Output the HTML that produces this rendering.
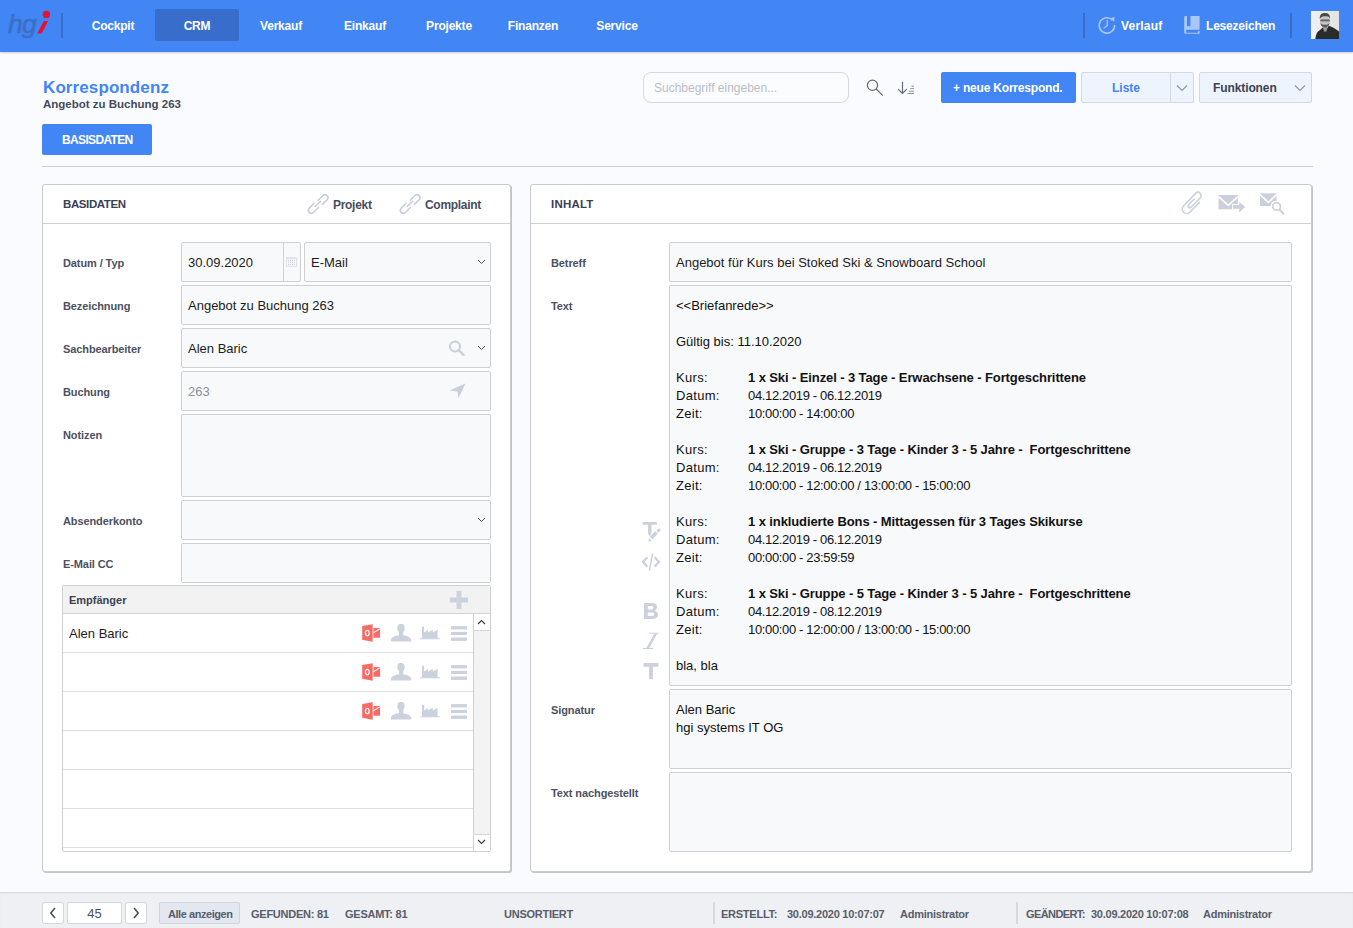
<!DOCTYPE html>
<html><head><meta charset="utf-8">
<style>
*{box-sizing:border-box;margin:0;padding:0}
html,body{width:1353px;height:928px;overflow:hidden}
body{background:#fafbfe;font-family:"Liberation Sans",sans-serif;position:relative;color:#1d1d1f}
.a{position:absolute;white-space:nowrap}
#nav{position:absolute;left:0;top:0;width:1353px;height:52px;background:#4285f4;box-shadow:0 1px 2px rgba(0,0,0,.18)}
.tab{position:absolute;top:9px;height:32px;width:84px;line-height:34px;text-align:center;color:#fff;font-weight:bold;font-size:12px;letter-spacing:-.2px}
.tab.on{background:#386dcb;border-radius:2px}
.nsep{position:absolute;width:2px;background:#3a6cc6}
.btn{position:absolute;border-radius:2px}
.lbl{position:absolute;font-size:11px;font-weight:bold;color:#4b5161;letter-spacing:-.1px;margin-top:1px}
.inp{position:absolute;background:#f8f9fb;border:1px solid #cfd0d1;border-radius:2px}
.it{position:absolute;font-size:13px;color:#1b1b1b}
.panel{position:absolute;background:#fff;border:1px solid #c9cacd;border-radius:3px;box-shadow:1px 1px 0 #c4c5c8}
.ph{position:absolute;left:0;right:0;top:0;height:39px;border-bottom:1px solid #cfd0d3}
.ptitle{position:absolute;font-size:12px;font-weight:bold;color:#3a4152}
.mail{position:absolute;left:676px;font-size:13px;color:#111;line-height:18px;margin-top:1px}
.mail b{font-weight:bold;letter-spacing:-.1px}
.dg{letter-spacing:-.35px}
.kl{letter-spacing:.3px}
.row{position:absolute;left:63px;width:411px;height:39px;border-bottom:1px solid #dcdcdc;background:#fff}
.ft{position:absolute;font-size:11px;color:#575d6a;font-weight:bold;letter-spacing:-.25px;margin-top:1px}
</style></head><body>

<div id="nav">
  <!-- logo -->
  <svg class="a" style="left:0;top:0" width="56" height="52" viewBox="0 0 56 52">
    <text x="8" y="33.3" font-family="Liberation Sans" font-style="italic" font-size="26.5" fill="#3b6fc6" stroke="#3b6fc6" stroke-width="0.6" letter-spacing="-0.8">hg</text>
    <path d="M37.2 33.6 L41.6 33.6 L48.2 21 L43.8 21 Z" fill="#e8112f"/>
    <circle cx="46.4" cy="14.4" r="3.7" fill="#e8112f"/>
  </svg>
  <div class="nsep" style="left:61px;top:13px;height:25px"></div>
  <div class="tab" style="left:71px">Cockpit</div>
  <div class="tab on" style="left:155px">CRM</div>
  <div class="tab" style="left:239px">Verkauf</div>
  <div class="tab" style="left:323px">Einkauf</div>
  <div class="tab" style="left:407px">Projekte</div>
  <div class="tab" style="left:491px">Finanzen</div>
  <div class="tab" style="left:575px">Service</div>

  <div class="nsep" style="left:1083px;top:13px;height:25px"></div>
  <!-- history icon -->
  <svg class="a" style="left:1097px;top:15px" width="20" height="20" viewBox="0 0 20 20">
    <path d="M15.6 5.2 A7.7 7.7 0 1 0 17.6 10" fill="none" stroke="#a9c6f8" stroke-width="1.6"/>
    <path d="M13.2 3.2 L17.6 2 L17.2 6.8 Z" fill="#a9c6f8"/>
    <path d="M10.2 5 V10.6 L6.6 13.2" fill="none" stroke="#a9c6f8" stroke-width="1.3"/>
  </svg>
  <div class="a" style="left:1121px;top:19px;font-size:12px;font-weight:bold;color:#fff;letter-spacing:.2px">Verlauf</div>
  <!-- book icon -->
  <svg class="a" style="left:1184px;top:16px" width="16" height="18" viewBox="0 0 16 18">
    <path d="M0.2 1 Q0.2 0 1.2 0 H15.6 V13.7 H2.2 V16.7 H13.9 V15 H15.6 V17.8 H1.2 Q0.2 17.8 0.2 16.8 Z" fill="#a9c6f8"/>
    <path d="M3 0 V10.8 L4.7 9.7 L6.4 10.8 V0 Z" fill="#4285f4"/>
  </svg>
  <div class="a" style="left:1206px;top:19px;font-size:12px;font-weight:bold;color:#fff;letter-spacing:-.2px">Lesezeichen</div>
  <div class="nsep" style="left:1290px;top:13px;height:25px"></div>
  <!-- avatar -->
  <svg class="a" style="left:1311px;top:11px" width="28" height="28" viewBox="0 0 28 28">
    <defs><linearGradient id="avbg" x1="0" x2="1"><stop offset="0" stop-color="#f2f2f2"/><stop offset="1" stop-color="#e2e2e2"/></linearGradient></defs>
    <rect width="28" height="28" fill="url(#avbg)"/>
    <path d="M4.3 28 C4.8 23 6.5 20 9 19 L12 16.2 L15 19 L17.8 14.8 C21 16 25 18 28 20.5 V28 Z" fill="#2b2b2b"/>
    <path d="M11.3 15 H16.5 L15.5 20.5 H13 Z" fill="#9a9a9a"/>
    <ellipse cx="14" cy="10.5" rx="4.6" ry="5.6" fill="#c4c4c4"/>
    <path d="M9.4 11 C9.5 15 11.5 16.2 14 16.2 C16.5 16.2 18.5 15 18.6 11 C18 13.5 16.5 14 14 13.5 C11.5 14 10 13.5 9.4 11Z" fill="#5a5a5a"/>
    <rect x="9.3" y="8.4" width="9.6" height="2" fill="#6a6a6a"/>
    <path d="M8.8 8 C8.5 3 11 2 14 2 C17 2 19.5 3.5 19 8 L18 6 C16 5 12 5 10 6.5 Z" fill="#4a4a4a"/>
  </svg>
</div>

<!-- header -->
<div class="a" style="left:43px;top:78px;font-size:17px;font-weight:bold;color:#4285f4;letter-spacing:.1px">Korrespondenz</div>
<div class="a" style="left:43px;top:98px;font-size:11.5px;font-weight:bold;color:#454b5a">Angebot zu Buchung 263</div>
<div class="btn" style="left:42px;top:124px;width:110px;height:31px;background:#4285f4"></div>
<div class="a" style="left:62px;top:133px;font-size:12px;font-weight:bold;color:#fff;letter-spacing:-.65px">BASISDATEN</div>
<div class="a" style="left:42px;top:166px;width:1271px;height:1px;background:#c9ccd2"></div>

<!-- search -->
<div class="a" style="left:643px;top:72px;width:206px;height:31px;border:1px solid #d6d8dc;border-radius:8px;background:#fbfcfe"></div>
<div class="a" style="left:654px;top:81px;font-size:12px;color:#b9bec6">Suchbegriff eingeben...</div>
<svg class="a" style="left:865px;top:79px" width="19" height="18" viewBox="0 0 19 18">
  <circle cx="7.5" cy="6.3" r="5.1" fill="none" stroke="#636a75" stroke-width="1.2"/>
  <path d="M11.2 10 L17.8 16.7" stroke="#636a75" stroke-width="1.2"/>
</svg>
<svg class="a" style="left:896px;top:80px" width="20" height="16" viewBox="0 0 20 16">
  <path d="M6.5 1.8 V13.3 M2.1 9.1 L6.5 13.5 L10.8 9.1" fill="none" stroke="#636b76" stroke-width="1.2"/>
  <path d="M15.5 6.2 H18 M14.2 8.6 H18 M13 11.2 H18 M11.5 13.5 H18" stroke="#8a929b" stroke-width="1"/>
</svg>
<div class="btn" style="left:941px;top:72px;width:135px;height:31px;background:#4285f4"></div>
<div class="a" style="left:953px;top:81px;font-size:12px;font-weight:bold;color:#fff;letter-spacing:-.2px">+ neue Korrespond.</div>
<div class="btn" style="left:1081px;top:72px;width:113px;height:31px;background:#eef4fd;border:1px solid #d3d9e2"></div>
<div class="a" style="left:1170px;top:73px;width:1px;height:29px;background:#d3d9e2"></div>
<div class="a" style="left:1112px;top:81px;font-size:12px;font-weight:bold;color:#4285f4">Liste</div>
<svg class="a" style="left:1176px;top:84px" width="12" height="8" viewBox="0 0 12 8"><path d="M1 1.5 L6 6.5 L11 1.5" fill="none" stroke="#8d96a3" stroke-width="1.1"/></svg>
<div class="btn" style="left:1199px;top:72px;width:113px;height:31px;background:#eef4fd;border:1px solid #d3d9e2"></div>
<div class="a" style="left:1213px;top:81px;font-size:12px;font-weight:bold;color:#3c4252;letter-spacing:-.1px">Funktionen</div>
<svg class="a" style="left:1294px;top:84px" width="12" height="8" viewBox="0 0 12 8"><path d="M1 1.5 L6 6.5 L11 1.5" fill="none" stroke="#8d96a3" stroke-width="1.1"/></svg>

<!-- LEFT PANEL -->
<div class="panel" style="left:42px;top:184px;width:469px;height:688px">
  <div class="ph"></div>
</div>
<div class="ptitle" style="left:63px;top:198px;font-size:11.5px;letter-spacing:-.4px">BASIDATEN</div>
<svg class="a" style="left:304px;top:190px" width="28" height="28" viewBox="0 0 28 28"><path d="M14.2 10.3 L18.88 5.58 A3 3 0 0 1 23.12 9.82 L18.5 14.4 M10.1 13.2 L5.18 18.18 A3 3 0 0 0 9.42 22.42 L14.37 17.47 M11.3 16.4 L16.6 11.2" fill="none" stroke="#c6cdd9" stroke-width="1.5" stroke-linecap="round"/></svg>
<div class="a" style="left:333px;top:198px;font-size:12px;font-weight:bold;color:#474d5c;letter-spacing:-.3px">Projekt</div>
<svg class="a" style="left:396px;top:190px" width="28" height="28" viewBox="0 0 28 28"><path d="M14.2 10.3 L18.88 5.58 A3 3 0 0 1 23.12 9.82 L18.5 14.4 M10.1 13.2 L5.18 18.18 A3 3 0 0 0 9.42 22.42 L14.37 17.47 M11.3 16.4 L16.6 11.2" fill="none" stroke="#c6cdd9" stroke-width="1.5" stroke-linecap="round"/></svg>
<div class="a" style="left:425px;top:198px;font-size:12px;font-weight:bold;color:#474d5c;letter-spacing:-.3px">Complaint</div>

<div class="lbl" style="left:63px;top:256px">Datum / Typ</div>
<div class="lbl" style="left:63px;top:299px">Bezeichnung</div>
<div class="lbl" style="left:63px;top:342px">Sachbearbeiter</div>
<div class="lbl" style="left:63px;top:385px">Buchung</div>
<div class="lbl" style="left:63px;top:428px">Notizen</div>
<div class="lbl" style="left:63px;top:514px">Absenderkonto</div>
<div class="lbl" style="left:63px;top:557px">E-Mail CC</div>

<div class="inp" style="left:181px;top:242px;width:120px;height:40px"></div>
<div class="a" style="left:283px;top:243px;width:1px;height:38px;background:#cfd0d1"></div>
<svg class="a" style="left:286px;top:257px" width="11" height="10" viewBox="0 0 11 10">
  <rect x="0" y="0" width="11" height="10" fill="#dfe2e8"/>
  <rect x="1" y="2" width="9" height="7" fill="#f6f7f9"/>
  <g fill="#cdd2da"><rect x="2" y="3" width="1" height="1"/><rect x="4" y="3" width="1" height="1"/><rect x="6" y="3" width="1" height="1"/><rect x="8" y="3" width="1" height="1"/><rect x="2" y="5" width="1" height="1"/><rect x="4" y="5" width="1" height="1"/><rect x="6" y="5" width="1" height="1"/><rect x="8" y="5" width="1" height="1"/><rect x="2" y="7" width="1" height="1"/><rect x="4" y="7" width="1" height="1"/><rect x="6" y="7" width="1" height="1"/><rect x="8" y="7" width="1" height="1"/></g>
</svg>
<div class="it" style="left:188px;top:255px">30.09.2020</div>
<div class="inp" style="left:304px;top:242px;width:187px;height:40px"></div>
<div class="it" style="left:311px;top:255px">E-Mail</div>
<svg class="a" style="left:477px;top:259px" width="9" height="6" viewBox="0 0 9 6"><path d="M1 1 L4.5 4.5 L8 1" fill="none" stroke="#474b52" stroke-width="1"/></svg>

<div class="inp" style="left:181px;top:285px;width:310px;height:40px"></div>
<div class="it" style="left:188px;top:298px">Angebot zu Buchung 263</div>

<div class="inp" style="left:181px;top:328px;width:310px;height:40px"></div>
<div class="it" style="left:188px;top:341px">Alen Baric</div>
<svg class="a" style="left:448px;top:340px" width="18" height="16" viewBox="0 0 18 16">
  <circle cx="7" cy="6.5" r="5" fill="none" stroke="#c9d0db" stroke-width="2"/>
  <path d="M10.5 10 L15.5 15" stroke="#c9d0db" stroke-width="2.4" stroke-linecap="round"/>
</svg>
<svg class="a" style="left:477px;top:345px" width="9" height="6" viewBox="0 0 9 6"><path d="M1 1 L4.5 4.5 L8 1" fill="none" stroke="#474b52" stroke-width="1"/></svg>

<div class="inp" style="left:181px;top:371px;width:310px;height:40px"></div>
<div class="it" style="left:188px;top:384px;color:#8b9099">263</div>
<svg class="a" style="left:449px;top:383px" width="17" height="16" viewBox="0 0 17 16">
  <path d="M0.5 7.5 L16.5 0.5 L9.5 15.5 L8.5 8.5 Z" fill="#c9d0db"/>
</svg>

<div class="inp" style="left:181px;top:414px;width:310px;height:83px"></div>
<div class="inp" style="left:181px;top:500px;width:310px;height:40px"></div>
<svg class="a" style="left:477px;top:517px" width="9" height="6" viewBox="0 0 9 6"><path d="M1 1 L4.5 4.5 L8 1" fill="none" stroke="#474b52" stroke-width="1"/></svg>
<div class="inp" style="left:181px;top:543px;width:310px;height:40px"></div>

<!-- Empfaenger -->
<div class="a" style="left:62px;top:585px;width:429px;height:267px;border:1px solid #cfd0d2;border-radius:2px;background:#fff;overflow:hidden">
  <div class="a" style="left:0;top:0;width:427px;height:28px;background:#f2f2f2;border-bottom:1px solid #d2d3d5"></div>
  <div class="a" style="left:0;top:28px;width:410px;height:39px;border-bottom:1px solid #dedede"></div>
  <div class="a" style="left:0;top:67px;width:410px;height:39px;border-bottom:1px solid #dedede"></div>
  <div class="a" style="left:0;top:106px;width:410px;height:39px;border-bottom:1px solid #dedede"></div>
  <div class="a" style="left:0;top:145px;width:410px;height:39px;border-bottom:1px solid #dedede"></div>
  <div class="a" style="left:0;top:184px;width:410px;height:39px;border-bottom:1px solid #dedede"></div>
  <div class="a" style="left:0;top:223px;width:410px;height:39px;border-bottom:1px solid #dedede"></div>
  <div class="a" style="left:410px;top:28px;width:18px;height:238px;background:#f3f3f3;border-left:1px solid #cfd0d2"></div>
  <div class="a" style="left:410px;top:28px;width:18px;height:17px;background:#fff;border-left:1px solid #cfd0d2;border-bottom:1px solid #d5d5d5"></div>
  <div class="a" style="left:410px;top:248px;width:18px;height:17px;background:#fff;border-left:1px solid #cfd0d2;border-top:1px solid #d5d5d5"></div>
</div>
<svg class="a" style="left:477px;top:619px" width="9" height="6" viewBox="0 0 9 6"><path d="M1 5 L4.5 1.5 L8 5" fill="none" stroke="#3a3d42" stroke-width="1.2"/></svg>
<svg class="a" style="left:477px;top:839px" width="9" height="6" viewBox="0 0 9 6"><path d="M1 1 L4.5 4.5 L8 1" fill="none" stroke="#3a3d42" stroke-width="1.2"/></svg>
<div class="a" style="left:69px;top:594px;font-size:11px;font-weight:bold;color:#3c4252">Empfänger</div>
<svg class="a" style="left:450px;top:591px" width="18" height="18" viewBox="0 0 18 18"><path d="M6.5 0 H11.5 V6.5 H18 V11.5 H11.5 V18 H6.5 V11.5 H0 V6.5 H6.5 Z" fill="#cdd3de"/></svg>
<div class="a" style="left:69px;top:626px;font-size:13px;color:#1b1b1b">Alen Baric</div>
<svg width="0" height="0" style="position:absolute">
  <defs>
    <g id="ico">
      <path d="M0.2 1.9 L10.7 0.2 V17.7 L0.2 15.8 Z" fill="#f76a66"/>
      <rect x="11.4" y="4" width="6.7" height="9.7" fill="#f76a66"/>
      <path d="M11.4 8.8 L18.1 4.6" stroke="#fff" stroke-width="1.1"/>
      <ellipse cx="5.3" cy="9.1" rx="1.9" ry="2.7" fill="none" stroke="#fff" stroke-width="1.2"/>
      <ellipse cx="39" cy="4" rx="3.7" ry="4.2" fill="#cbd2de"/>
      <rect x="37" y="7" width="4.2" height="5" fill="#cbd2de"/>
      <path d="M28.9 17.6 V15.8 C29.5 12.8 33 11.9 37 11.2 H41.2 C45.2 11.9 48.5 12.8 49.1 15.8 V17.6 Z" fill="#cbd2de"/>
      <path d="M60 14.1 V2.7 H62.1 V8.6 L65.9 5.7 V8.6 L70.8 5.7 V8.6 L75.6 5.7 V14.1 Z" fill="#cbd2de"/>
      <rect x="58.3" y="14.1" width="19.4" height="1.2" fill="#cbd2de"/>
      <rect x="89.1" y="2.1" width="15.8" height="3.3" fill="#cbd2de"/>
      <rect x="89.1" y="7.9" width="15.8" height="3.1" fill="#cbd2de"/>
      <rect x="89.1" y="13.5" width="15.8" height="3.4" fill="#cbd2de"/>
    </g>
  </defs>
</svg>
<svg class="a" style="left:362px;top:624px" width="106" height="18" viewBox="0 0 106 18"><use href="#ico"/></svg>
<svg class="a" style="left:362px;top:663px" width="106" height="18" viewBox="0 0 106 18"><use href="#ico"/></svg>
<svg class="a" style="left:362px;top:702px" width="106" height="18" viewBox="0 0 106 18"><use href="#ico"/></svg>

<!-- RIGHT PANEL -->
<div class="panel" style="left:530px;top:184px;width:782px;height:688px">
  <div class="ph"></div>
</div>
<div class="ptitle" style="left:551px;top:198px;font-size:11.5px;letter-spacing:.2px">INHALT</div>
<svg class="a" style="left:1176px;top:186px" width="114" height="34" viewBox="0 0 114 34">
  <path d="M18.3 13 L12.53 18.73 A1.8 1.8 0 0 0 15.07 21.27 L24.5 11.5 A3.3 3.3 0 0 0 19.9 6.9 L7.46 20.26 A4.3 4.3 0 0 0 13.54 26.34 L23.5 16.4" fill="none" stroke="#cad1dc" stroke-width="1.6" stroke-linecap="round"/>
  <rect x="42.5" y="9" width="19.4" height="14.3" fill="#cad1dc"/>
  <path d="M42.5 10.6 L52.2 19.3 L61.9 10.6" fill="none" stroke="#fff" stroke-width="1.7"/>
  <path d="M56 18.1 H62.3 V15 L70.2 21 L62.3 27.4 V23.8 H56 Z" fill="#fff"/>
  <path d="M57 19.1 H63.3 V16 L69.2 21 L63.3 26.4 V22.8 H57 Z" fill="#cad1dc"/>
  <rect x="84" y="7.3" width="16.6" height="12.7" fill="#cad1dc"/>
  <path d="M84 8.6 L92.3 16.3 L100.6 8.6" fill="none" stroke="#fff" stroke-width="1.7"/>
  <circle cx="100.6" cy="20.5" r="6" fill="#fff"/>
  <circle cx="100.6" cy="20.5" r="3.9" fill="none" stroke="#cad1dc" stroke-width="1.7"/>
  <path d="M103.6 23.6 L107.3 27.6" stroke="#cad1dc" stroke-width="2.2" stroke-linecap="round"/>
</svg>

<div class="lbl" style="left:551px;top:256px">Betreff</div>
<div class="lbl" style="left:551px;top:299px">Text</div>
<div class="lbl" style="left:551px;top:703px">Signatur</div>
<div class="lbl" style="left:551px;top:786px">Text nachgestellt</div>

<div class="inp" style="left:669px;top:242px;width:623px;height:40px"></div>
<div class="it" style="left:676px;top:255px">Angebot für Kurs bei Stoked Ski &amp; Snowboard School</div>
<div class="inp" style="left:669px;top:285px;width:623px;height:401px"></div>
<div class="mail" style="top:296px">&lt;&lt;Briefanrede&gt;&gt;</div>
<div class="mail" style="top:332px">Gültig bis: 11.10.2020</div>
<div class="mail" style="top:368px"><span class="kl">Kurs:<br>Datum:<br>Zeit:</span></div>
<div class="mail" style="top:368px;left:748px"><b>1 x Ski - Einzel - 3 Tage - Erwachsene - Fortgeschrittene</b><br><span class="dg">04.12.2019 - 06.12.2019<br>10:00:00 - 14:00:00</span></div>
<div class="mail" style="top:440px"><span class="kl">Kurs:<br>Datum:<br>Zeit:</span></div>
<div class="mail" style="top:440px;left:748px"><b>1 x Ski - Gruppe - 3 Tage - Kinder 3 - 5 Jahre -&nbsp; Fortgeschrittene</b><br><span class="dg">04.12.2019 - 06.12.2019<br>10:00:00 - 12:00:00 / 13:00:00 - 15:00:00</span></div>
<div class="mail" style="top:512px"><span class="kl">Kurs:<br>Datum:<br>Zeit:</span></div>
<div class="mail" style="top:512px;left:748px"><b>1 x inkludierte Bons - Mittagessen für 3 Tages Skikurse</b><br><span class="dg">04.12.2019 - 06.12.2019<br>00:00:00 - 23:59:59</span></div>
<div class="mail" style="top:584px"><span class="kl">Kurs:<br>Datum:<br>Zeit:</span></div>
<div class="mail" style="top:584px;left:748px"><b>1 x Ski - Gruppe - 5 Tage - Kinder 3 - 5 Jahre -&nbsp; Fortgeschrittene</b><br><span class="dg">04.12.2019 - 08.12.2019<br>10:00:00 - 12:00:00 / 13:00:00 - 15:00:00</span></div>
<div class="mail" style="top:656px">bla, bla</div>

<!-- editor toolbar icons -->
<svg class="a" style="left:641px;top:521px" width="20" height="22" viewBox="0 0 20 22">
  <path d="M2.6 1.1 H14.9 A1.3 1.3 0 0 1 14.9 3.7 H10.5 V12.5 L8.7 15.2 L7 12.5 V3.7 H2.6 A1.3 1.3 0 0 1 2.6 1.1 Z" fill="#cbd2de"/>
  <path d="M10 17 L15.6 11.4" stroke="#cbd2de" stroke-width="3.6"/>
  <path d="M17.3 9.7 L17.9 9.1" stroke="#cbd2de" stroke-width="3.2" stroke-linecap="round"/>
  <path d="M7.3 20.6 L8 17.2 L10.6 19.8 Z" fill="#cbd2de"/>
</svg>
<svg class="a" style="left:641px;top:553px" width="20" height="18" viewBox="0 0 20 18">
  <path d="M6.3 4.2 L2 8.9 L6.3 13.6 M13.7 4.2 L18 8.9 L13.7 13.6" fill="none" stroke="#cbd2de" stroke-width="2.3"/>
  <path d="M11.5 1 L8.4 17" stroke="#cbd2de" stroke-width="1.5" stroke-linecap="round"/>
</svg>
<svg class="a" style="left:643px;top:602px" width="16" height="18" viewBox="0 0 16 18">
  <path d="M1 1 H8.5 C13 1 14 3 14 5 C14 7 13 8 11.5 8.6 C13.5 9.2 15 10.5 15 12.8 C15 15.5 13 17 9 17 H1 Z M4.8 4 V7.6 H8.3 C9.6 7.6 10.3 7 10.3 5.8 C10.3 4.6 9.6 4 8.3 4 Z M4.8 10.5 V14 H8.8 C10.3 14 11.1 13.4 11.1 12.2 C11.1 11 10.3 10.5 8.8 10.5 Z" fill="#cbd2de" fill-rule="evenodd"/>
</svg>
<svg class="a" style="left:642px;top:632px" width="18" height="18" viewBox="0 0 18 18">
  <path d="M7.4 1.2 H16.7 M0.9 16.5 H11.1" fill="none" stroke="#cbd2de" stroke-width="1.1"/>
  <path d="M12.3 1.5 L15.3 1.5 L7.2 16.2 L4.3 16.2 Z" fill="#cbd2de"/>
</svg>
<svg class="a" style="left:643px;top:662px" width="16" height="18" viewBox="0 0 16 18">
  <path d="M0.5 1 H15.5 V4.8 H9.9 V17 H6.1 V4.8 H0.5 Z" fill="#cbd2de"/>
</svg>

<div class="inp" style="left:669px;top:689px;width:623px;height:80px"></div>
<div class="mail" style="top:700px">Alen Baric<br>hgi systems IT OG</div>
<div class="inp" style="left:669px;top:772px;width:623px;height:80px"></div>

<!-- footer -->
<div class="a" style="left:0;top:892px;width:1353px;height:36px;background:#eff0f4;border-top:1px solid #d8dade;box-shadow:inset 0 1px 2px rgba(0,0,0,.04)"></div>
<div class="a" style="left:42px;top:902px;width:22px;height:22px;background:#fff;border:1px solid #d3d6dc;border-radius:3px"></div>
<svg class="a" style="left:49px;top:907px" width="8" height="12" viewBox="0 0 8 12"><path d="M6 1 L1.8 6 L6 11" fill="none" stroke="#4a505c" stroke-width="1.6"/></svg>
<div class="a" style="left:67px;top:902px;width:55px;height:22px;background:#fff;border:1px solid #d3d6dc;border-radius:2px"></div>
<div class="a" style="left:67px;top:906px;width:55px;text-align:center;font-size:13px;color:#4a505c">45</div>
<div class="a" style="left:125px;top:902px;width:22px;height:22px;background:#fff;border:1px solid #d3d6dc;border-radius:3px"></div>
<svg class="a" style="left:132px;top:907px" width="8" height="12" viewBox="0 0 8 12"><path d="M2 1 L6.2 6 L2 11" fill="none" stroke="#4a505c" stroke-width="1.6"/></svg>
<div class="a" style="left:159px;top:902px;width:81px;height:22px;background:#e3e8f0;border:1px solid #cfd5de;border-radius:2px"></div>
<div class="a" style="left:168px;top:908px;font-size:11px;font-weight:bold;color:#575d6a;letter-spacing:-.45px">Alle anzeigen</div>
<div class="ft" style="left:251px;top:907px">GEFUNDEN: 81</div>
<div class="ft" style="left:345px;top:907px">GESAMT: 81</div>
<div class="ft" style="left:504px;top:907px">UNSORTIERT</div>
<div class="a" style="left:713px;top:902px;width:2px;height:22px;background:#d6d9de"></div>
<div class="ft" style="left:721px;top:907px">ERSTELLT:</div>
<div class="ft" style="left:787px;top:907px">30.09.2020 10:07:07</div>
<div class="ft" style="left:900px;top:907px">Administrator</div>
<div class="a" style="left:1016px;top:902px;width:2px;height:22px;background:#d6d9de"></div>
<div class="ft" style="left:1026px;top:907px;letter-spacing:-.6px">GEÄNDERT:</div>
<div class="ft" style="left:1091px;top:907px">30.09.2020 10:07:08</div>
<div class="ft" style="left:1203px;top:907px">Administrator</div>

</body></html>
